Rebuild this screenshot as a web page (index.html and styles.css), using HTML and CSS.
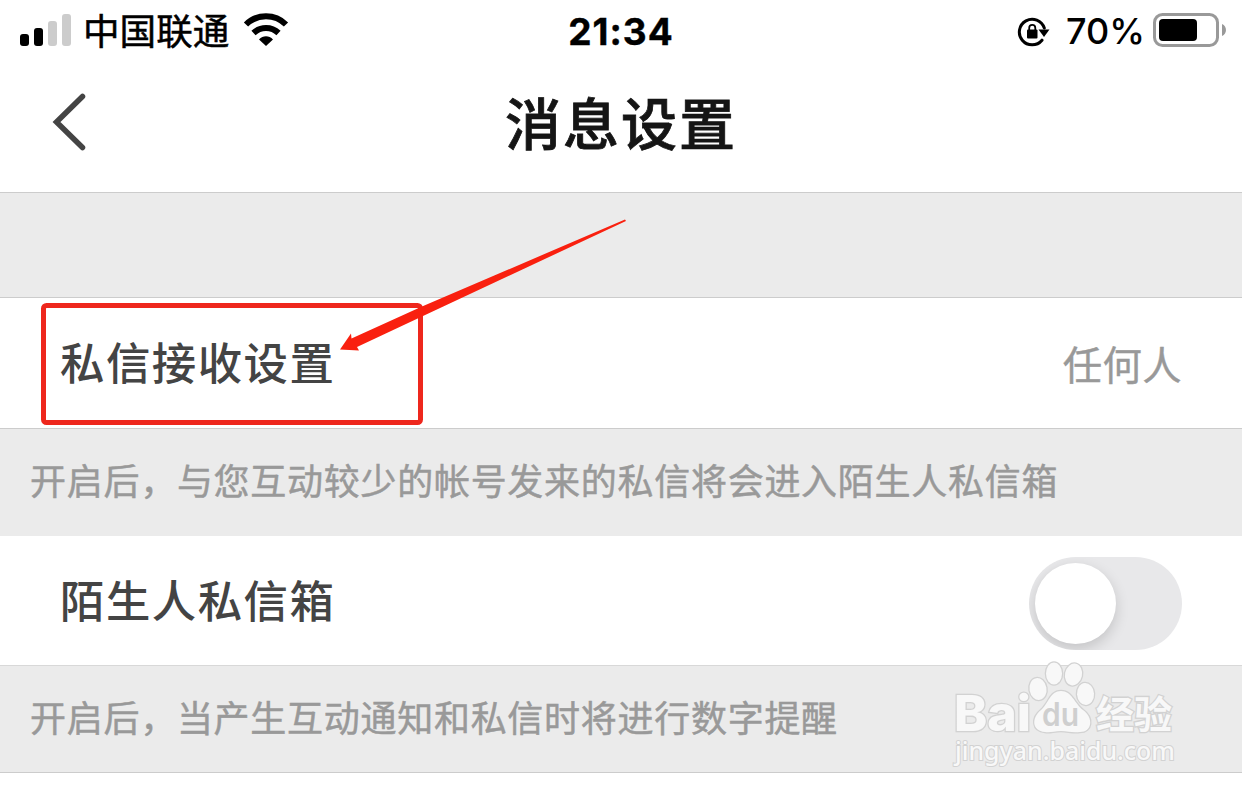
FILE: index.html
```html
<!DOCTYPE html>
<html lang="zh-CN">
<head>
  <meta charset="UTF-8" />
  <meta name="viewport" content="width=device-width, initial-scale=1.0" />
  <title>消息设置</title>
  <link rel="stylesheet" href="styles.css">
</head>
<body>
  <div class="status-bar">
    <div class="status-left">
      <svg class="signal" width="52" height="32" viewBox="0 0 52 32">
        <rect x="0" y="20" width="9" height="12" rx="3" fill="#000" />
        <rect x="14" y="14" width="9" height="18" rx="3" fill="#000" />
        <rect x="28" y="7" width="9" height="25" rx="3" fill="#ccc" />
        <rect x="42" y="0" width="9" height="32" rx="3" fill="#ccc" />
      </svg>
      <span class="carrier">中国联通</span>
      <svg class="wifi" width="46" height="34" viewBox="0 0 46 34">
        <path d="M3 11.500C14 .5 32 .5 43 11.500" fill="none" stroke="#000" stroke-width="6" />
        <path d="M10.500 20C17.500 13.200 28.500 13.200 35.500 20" fill="none" stroke="#000" stroke-width="6" />
        <path d="M16 26.500C20 22.300 26 22.300 30 26.500L23 33Z" fill="#000" />
      </svg>
    </div>
    <div class="clock">21:34</div>
    <div class="status-right">
      <svg class="rotation-lock" width="34" height="30" viewBox="0 0 34 30">
        <path d="M27.300 11A12.800 12.800 0 1 0 25 23.200" fill="none" stroke="#000" stroke-width="3" stroke-linecap="round" />
        <path d="M21.500 12.500H32.500L27 20Z" fill="#000" />
        <rect x="10" y="12.500" width="10.500" height="9" rx="1" fill="#000" />
        <path d="M12.200 13V11a3.050 3.050 0 0 1 6.100 0V13" fill="none" stroke="#000" stroke-width="1.800" />
      </svg>
      <span class="percent">70%</span>
      <svg class="battery" width="74" height="34" viewBox="0 0 74 34">
        <rect x="1.500" y="1.500" width="63" height="31" rx="8" fill="none" stroke="#999" stroke-width="3" />
        <rect x="6" y="6" width="38" height="22" rx="4" fill="#000" />
        <path d="M69 11C74.300 13 74.300 21 69 23Z" fill="#999" />
      </svg>
    </div>
  </div>

  <header class="navbar">
    <svg class="back" width="36" height="60" viewBox="0 0 36 60">
      <path d="M31.500 4.500L5.500 30L31.500 55.500" fill="none" stroke="#444" stroke-width="5.500" stroke-linecap="round" />
    </svg>
    <h1>消息设置</h1>
  </header>

  <main>
    <div class="spacer"></div>
    <div class="row row-receive">
      <span class="label">私信接收设置</span>
      <span class="value">任何人</span>
    </div>
    <p class="note note-receive">开启后，与您互动较少的帐号发来的私信将会进入陌生人私信箱</p>
    <div class="row row-stranger">
      <span class="label">陌生人私信箱</span>
      <span class="switch"><span class="knob"></span></span>
    </div>
    <p class="note note-remind">开启后，当产生互动通知和私信时将进行数字提醒</p>
  </main>

  <!-- red box and arrow over the first row -->
  <svg class="callout" width="600" height="220" viewBox="0 0 600 220">
    <rect x="13.500" y="95.500" width="377" height="117" rx="3" fill="none" stroke="#ee271d" stroke-width="5" />
    <path d="M310 139.500L321 123.500L321.500 128.500L392 96.500L595 9.500L596 11L393 106L327 137L329 140.500Z" fill="#f9200f" />
  </svg>

  <svg class="watermark" width="240" height="120" viewBox="0 0 240 120">
    <g class="wm-shape">
      <text class="wm-bai" x="12" y="75" textLength="77" lengthAdjust="spacingAndGlyphs">Bai</text>
      <ellipse cx="96" cy="33" rx="8.500" ry="11" transform="rotate(-10 96 33)" />
      <ellipse cx="112" cy="17.500" rx="8" ry="11" />
      <ellipse cx="131.500" cy="18.500" rx="8.500" ry="11" transform="rotate(12 131.500 18.500)" />
      <ellipse cx="143.500" cy="38" rx="8.500" ry="11" transform="rotate(-4 143.500 38)" />
      <path d="M119 35C130 35 132 47 141 54C152 62 150 76 138 76C130 77 126 75 119 75C112 75 108 77 103 76C90 75 89 62 99 54C107 47 108 35 119 35Z" />
      <text class="wm-cn" x="154" y="72" textLength="76" lengthAdjust="spacingAndGlyphs">经验</text>
      <text class="wm-url" x="13" y="104" textLength="220" lengthAdjust="spacingAndGlyphs">jingyan.baidu.com</text>
    </g>
    <text class="wm-du" x="100" y="70" textLength="37" lengthAdjust="spacingAndGlyphs">du</text>
  </svg>
</body>
</html>
```
FILE: styles.css
```css
* {
  box-sizing: border-box;
}

body {
  margin: 0;
  height: 795px;
  position: relative;
  overflow: hidden;
  background-color: #fff;
  font-family: "Noto Sans CJK SC", sans-serif;
}

svg {
  display: block;
  flex: none;
}

.status-bar {
  height: 62px;
  display: grid;
  grid-template-columns: 1fr auto 1fr;
  align-items: center;
  padding: 0 15px 2px 20px;
  color: #000;
}

.status-left,
.status-right {
  display: flex;
  align-items: center;
}

.status-right {
  justify-content: flex-end;
}

.carrier {
  margin: 0 14px 0 11px;
  font-size: 36.6px;
  line-height: 56px;
  -webkit-text-stroke: 0.5px #000;
}

.clock {
  margin-right: 5px;
  padding-top: 2px;
  font-family: Inter, sans-serif;
  font-size: 37px;
  font-weight: 700;
  letter-spacing: 1px;
  -webkit-text-stroke: 0.4px #000;
}

.percent {
  margin: 0 8px 0 15px;
  padding-top: 2px;
  font-family: Inter, sans-serif;
  font-size: 36px;
  font-weight: 500;
}

.rotation-lock {
  margin-top: 3px;
}

.navbar {
  height: 131px;
  display: grid;
  grid-template-columns: 1fr auto 1fr;
  align-items: start;
  border-bottom: 1px solid #ccc;
}

.back {
  margin: 30px 0 0 51px;
}

h1 {
  margin: 18px 0 0;
  font-size: 56px;
  line-height: 82px;
  font-weight: 500;
  letter-spacing: 2px;
  color: #151515;
  -webkit-text-stroke: 0.8px #151515;
}

.spacer {
  height: 105px;
  background-color: #ebebeb;
  border-bottom: 1px solid #ccc;
}

.row {
  display: flex;
  align-items: center;
  justify-content: space-between;
  padding: 0 60px;
  background-color: #fff;
}

.row-receive {
  height: 131px;
  border-bottom: 1px solid #ccc;
}

.row-stranger {
  height: 130px;
  border-bottom: 1px solid #d8d8d8;
}

.label {
  padding-bottom: 5px;
  font-size: 44.4px;
  font-weight: 500;
  letter-spacing: 1.5px;
  color: #444;
}

.value {
  padding-bottom: 2px;
  font-size: 39.4px;
  letter-spacing: 0.4px;
  color: #999;
  -webkit-text-stroke: 0.4px #999;
}

.note {
  margin: 0;
  padding-left: 30px;
  font-size: 36px;
  line-height: 100px;
  letter-spacing: 0.72px;
  white-space: nowrap;
  color: #999;
  background-color: #ebebeb;
  -webkit-text-stroke: 0.5px #999;
}

.note-receive {
  height: 107px;
}

.note-remind {
  height: 107px;
  border-bottom: 1px solid #ccc;
}

.switch {
  width: 153px;
  height: 93px;
  margin: 6px 0 0;
  padding: 6px;
  border-radius: 47px;
  background-color: #e8e8ea;
  overflow: hidden;
}

.knob {
  display: block;
  width: 81px;
  height: 81px;
  border-radius: 50%;
  background-color: #fff;
  box-shadow: 0 5px 14px rgba(0, 0, 0, 0.16);
}

.callout {
  position: absolute;
  left: 30px;
  top: 210px;
}

.watermark {
  position: absolute;
  left: 942px;
  top: 656px;
}

.wm-shape {
  fill: #f8f8f8;
  stroke: #d2d2d2;
  stroke-width: 2.6px;
  paint-order: stroke;
}

.wm-bai,
.wm-du {
  font-family: Inter, sans-serif;
  font-size: 50px;
  font-weight: 800;
}

.wm-du {
  font-size: 32px;
  font-weight: 600;
  fill: #cfcfcf;
}

.wm-cn {
  font-size: 38px;
  font-weight: 700;
}

.wm-url {
  font-family: "Noto Sans", sans-serif;
  font-size: 25px;
  font-weight: 500;
  stroke-width: 2px;
}
```
